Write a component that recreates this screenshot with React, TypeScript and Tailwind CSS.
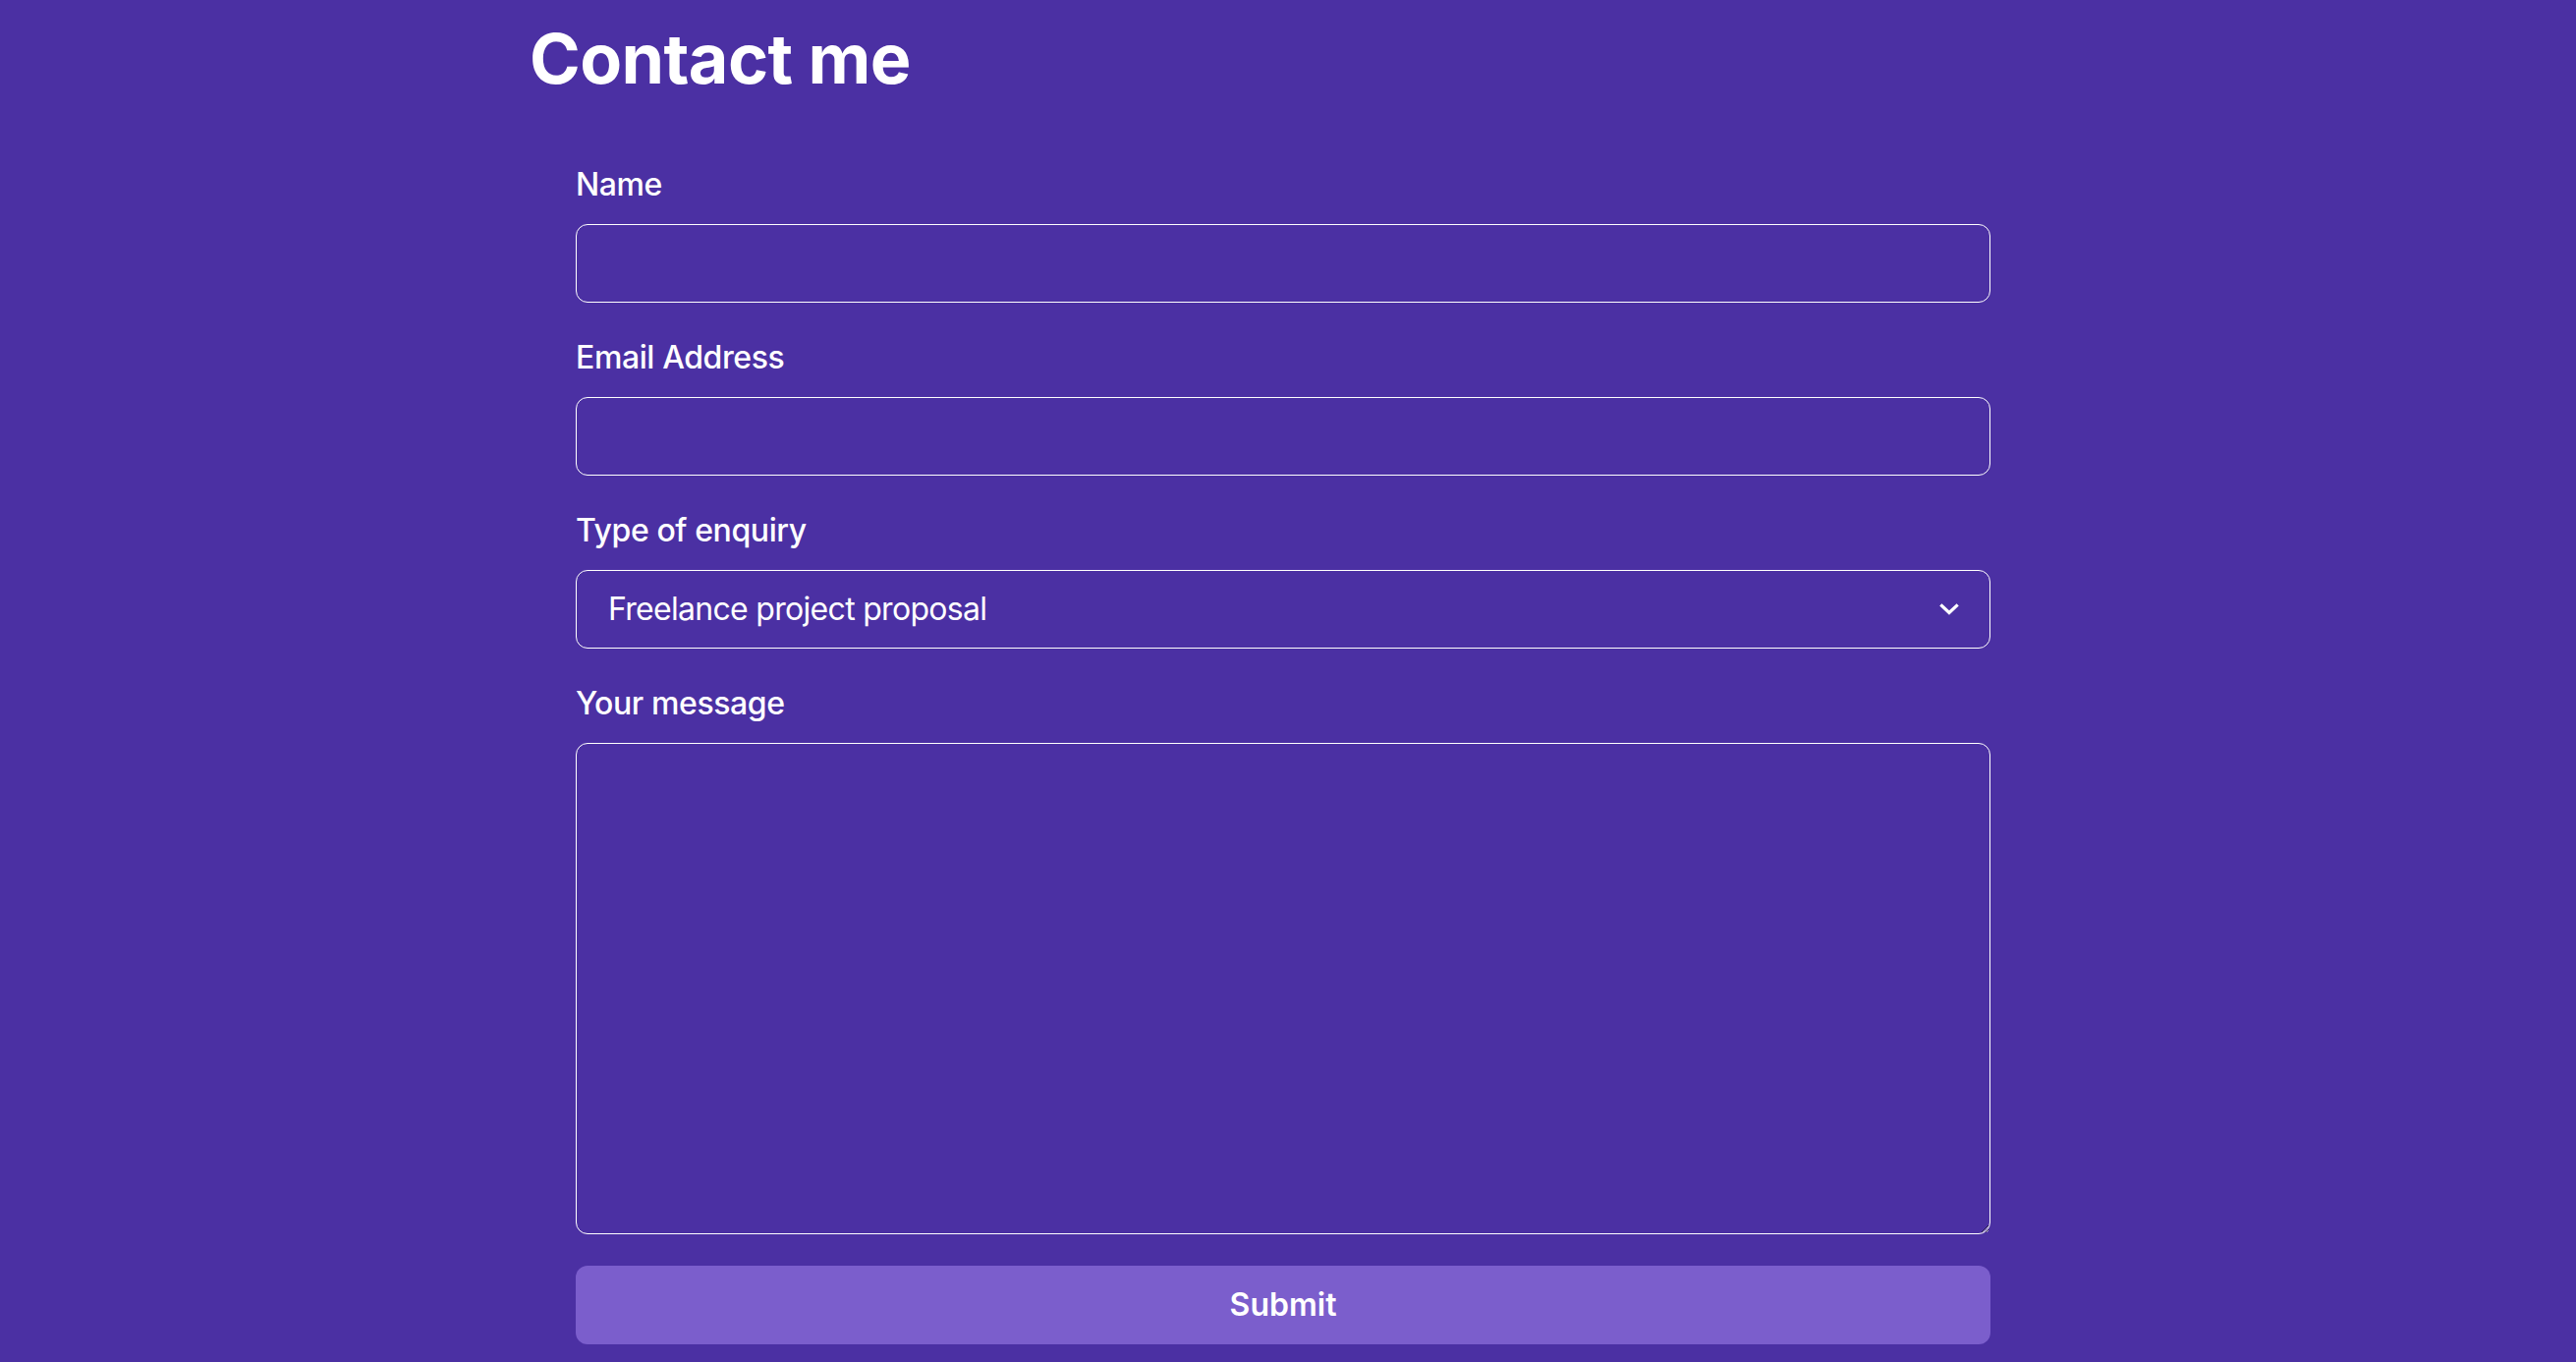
import { useState } from "react";

const fields = [
  { id: "name", label: "Name", type: "text" },
  { id: "email", label: "Email Address", type: "email" },
];

export default function App() {
  const [enquiry, setEnquiry] = useState("freelance");

  return (
    <div className="min-h-screen bg-[#4b30a3] font-['Inter',sans-serif] text-white">
      <div className="pl-[539px] pt-[18px]">
        <h1 className="text-[70px] font-bold leading-[1.2] tracking-[-0.6px]">Contact me</h1>

        <form className="ml-[47px] mt-[62px] flex w-[1440px] flex-col gap-[32px]">
          {fields.map((f) => (
            <div key={f.id} className="flex flex-col">
              <label htmlFor={f.id} className="mb-[16px] text-[32px] font-medium leading-[48px] tracking-[-0.4px]">
                {f.label}
              </label>
              <input
                id={f.id}
                type={f.type}
                className="h-[80px] rounded-[12px] border-[1.5px] border-white bg-transparent px-[32px] text-[32px] outline-none"
              />
            </div>
          ))}

          {/* Select */}
          <div className="flex flex-col">
            <label htmlFor="type" className="mb-[16px] text-[32px] font-medium leading-[48px] tracking-[-0.4px]">
              Type of enquiry
            </label>
            <div className="relative">
              <select
                id="type"
                value={enquiry}
                onChange={(e) => setEnquiry(e.target.value)}
                className="h-[80px] w-full appearance-none rounded-[12px] border-[1.5px] border-white bg-transparent px-[32px] text-[32px] tracking-[-0.7px] text-white outline-none"
              >
                <option value="freelance">Freelance project proposal</option>
                <option value="open-source">Open source consultancy session</option>
                <option value="other">Other</option>
              </select>
              <svg
                className="pointer-events-none absolute right-[30px] top-1/2 h-[24px] w-[24px] -translate-y-1/2"
                viewBox="0 0 24 24"
                fill="none"
                stroke="white"
                strokeWidth="3.2"
                strokeLinecap="square"
              >
                <path d="M4.5 8.5 12 15.5 19.5 8.5" />
              </svg>
            </div>
          </div>

          {/* Message */}
          <div className="flex flex-col">
            <label htmlFor="message" className="mb-[16px] text-[32px] font-medium leading-[48px] tracking-[-0.4px]">
              Your message
            </label>
            <textarea
              id="message"
              className="h-[500px] rounded-[12px] border-[1.5px] border-white bg-transparent px-[32px] py-[16px] text-[32px] outline-none"
            />
          </div>

          <button
            type="submit"
            className="h-[80px] w-full rounded-[12px] bg-[#7b5ecc] text-[32px] font-semibold text-white"
          >
            Submit
          </button>
        </form>
      </div>
    </div>
  );
}
